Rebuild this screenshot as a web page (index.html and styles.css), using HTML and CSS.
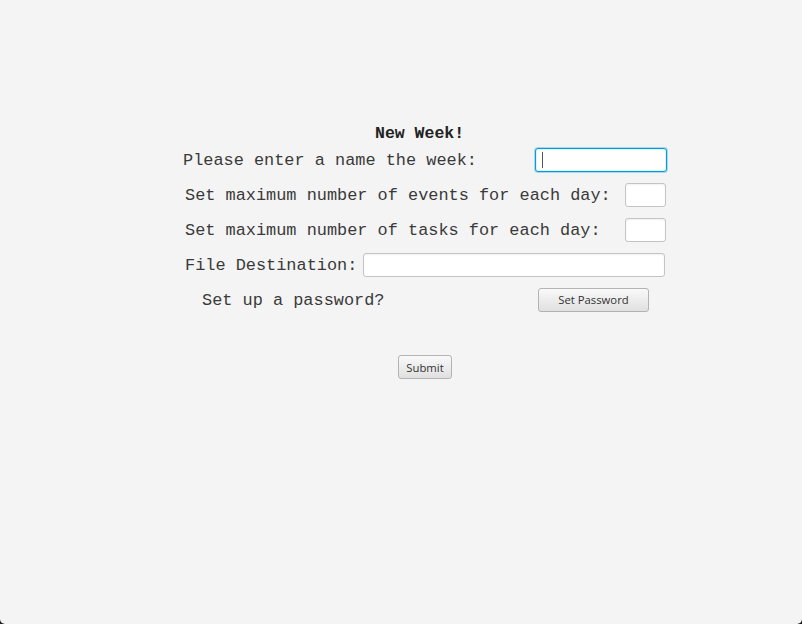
FILE: index.html
```html
<!DOCTYPE html>
<html>
<head>
<meta charset="utf-8">
<link rel="stylesheet" href="styles.css">
<title>New Week</title>
</head>
<body>
<div class="page">
  <div class="form">
    <div class="title">New Week!</div>
    <div class="row">
      <span class="label">Please enter a name the week:</span>
      <div class="field field-focused field-name"><span class="caret"></span></div>
    </div>
    <div class="row row-indent">
      <span class="label">Set maximum number of events for each day:</span>
      <div class="field field-small"></div>
    </div>
    <div class="row row-indent">
      <span class="label">Set maximum number of tasks for each day:</span>
      <div class="field field-small"></div>
    </div>
    <div class="row row-indent">
      <span class="label">File Destination:</span>
      <div class="field field-file"></div>
    </div>
    <div class="row row-password">
      <span class="label">Set up a password?</span>
      <button class="btn btn-password">Set Password</button>
    </div>
    <div class="submit-row">
      <button class="btn btn-submit">Submit</button>
    </div>
  </div>
</div>
</body>
</html>
```

FILE: styles.css
```css
html, body {
  margin: 0;
  padding: 0;
  background: #1e1e1e;
}
.page {
  width: 802px;
  height: 624px;
  background: #f4f4f4;
  border-radius: 0 0 5px 5px;
  box-sizing: border-box;
  padding-top: 123px;
  overflow: hidden;
}
.form {
  width: 484px;
  margin-left: 183px;
  font-family: "Liberation Mono", "Courier New", monospace;
  color: #3a3a3a;
}
.title {
  height: 19px;
  line-height: 21px;
  font-size: 16.5px;
  font-weight: bold;
  color: #222222;
  padding-left: 192px;
}
.row {
  height: 35px;
  display: flex;
  align-items: center;
}
.label {
  font-size: 16.9px;
  white-space: nowrap;
  padding-top: 2px;
}
.row-indent .label {
  padding-left: 2px;
}
.row-password .label {
  padding-left: 19px;
}
.field {
  margin-left: auto;
  height: 24px;
  box-sizing: border-box;
  background: #ffffff;
  border: 1px solid #c4c4c4;
  border-radius: 3px;
  box-shadow: inset 0 1px 2px rgba(0,0,0,0.06);
  display: flex;
  align-items: center;
}
.field-focused {
  border: 1px solid #039ed3;
  box-shadow: 0 0 0 1px #a6d8ee, inset 0 0 0 1px #dff1f9;
}
.field-name {
  width: 132px;
}
.field-small {
  width: 41px;
  margin-right: 1px;
}
.field-file {
  width: 302px;
  margin-right: 2px;
}
.caret {
  width: 1px;
  height: 16px;
  background: #555555;
  margin-left: 6px;
}
.btn {
  font-family: "Open Sans", "Noto Sans", sans-serif;
  font-size: 11.3px;
  color: #333333;
  height: 24px;
  box-sizing: border-box;
  border: 1px solid #b3b3b3;
  border-radius: 3px;
  background: linear-gradient(#f9f9f9, #e0e0e0);
  padding: 0;
  cursor: pointer;
}
.btn-password {
  margin-left: auto;
  margin-right: 18px;
  width: 111px;
}
.submit-row {
  margin-top: 38px;
  display: flex;
  justify-content: center;
}
.btn-submit {
  width: 54px;
}
```
